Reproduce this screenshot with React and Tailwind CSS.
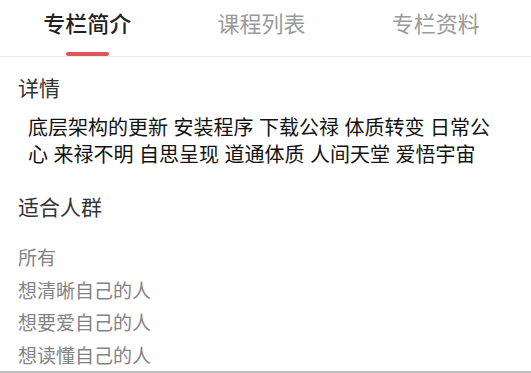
export default function App() {
  const font = { fontFamily: '"Noto Sans CJK SC", "Noto Sans", sans-serif' };
  return (
    <div className="w-[531px] h-[373px] bg-white overflow-hidden flex flex-col" style={font}>
      <div className="h-[58px] border-b border-[#ececec] grid grid-cols-3 pr-2">
        <div className="flex flex-col items-center">
          <div className="mt-[6px] h-[32px] leading-[32px] text-[22px] font-medium text-[#222]">专栏简介</div>
          <div className="mt-[14px] w-[43px] h-[4px] rounded-full bg-[#e05656]"></div>
        </div>
        <div className="flex flex-col items-center">
          <div className="mt-[6px] h-[32px] leading-[32px] text-[22px] text-[#9a9a9a]">课程列表</div>
        </div>
        <div className="flex flex-col items-center">
          <div className="mt-[6px] h-[32px] leading-[32px] text-[22px] text-[#9a9a9a]">专栏资料</div>
        </div>
      </div>
      <div className="pl-[18px] flex-1 flex flex-col">
        <div className="mt-[16px] h-[28px] leading-[28px] text-[21px] text-[#333]">详情</div>
        <div className="mt-[12px] pl-[10px] pr-[34px] text-[20px] leading-[27px] text-[#111] [word-spacing:1px]">
          底层架构的更新 安装程序 下载公禄 体质转变 日常公心 来禄不明 自思呈现 道通体质 人间天堂 爱悟宇宙
        </div>
        <div className="mt-[25px] h-[28px] leading-[28px] text-[21px] text-[#333]">适合人群</div>
        <div className="mt-[21px] flex flex-col text-[19px] text-[#838383]">
          <div className="h-[32.5px] leading-[32.5px]">所有</div>
          <div className="h-[32.5px] leading-[32.5px]">想清晰自己的人</div>
          <div className="h-[32.5px] leading-[32.5px]">想要爱自己的人</div>
          <div className="h-[32.5px] leading-[32.5px]">想读懂自己的人</div>
        </div>
      </div>
      <div className="h-[2px] bg-[#bdbdbd]"></div>
    </div>
  );
}
